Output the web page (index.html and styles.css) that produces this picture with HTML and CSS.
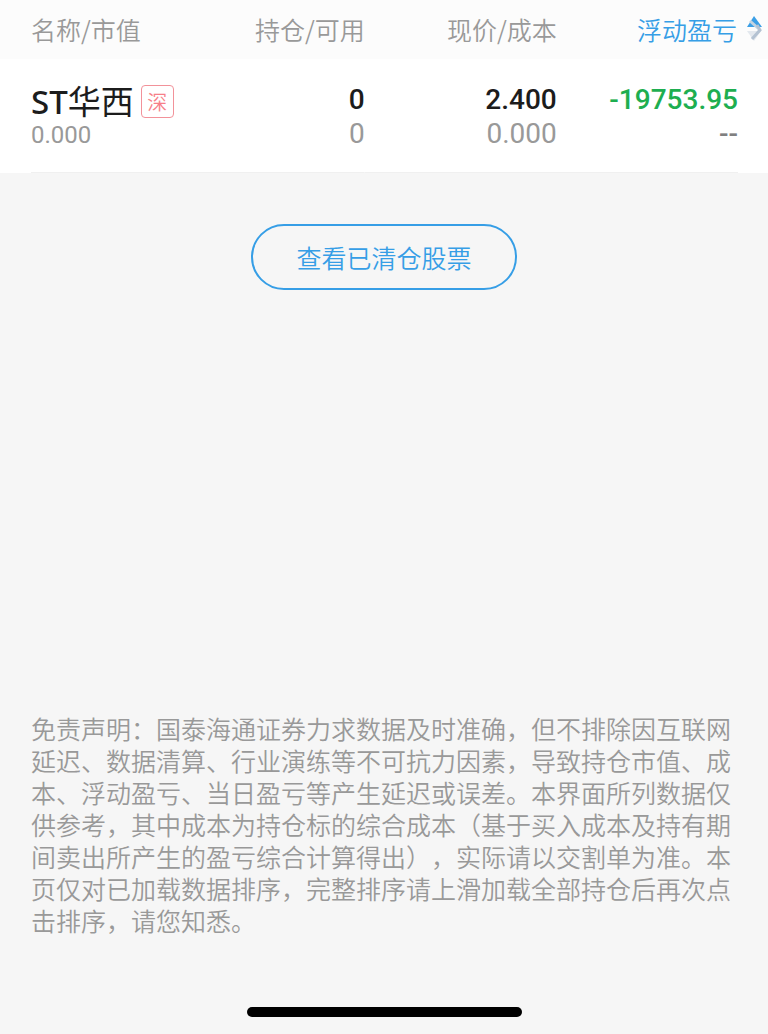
FILE: index.html
```
<!DOCTYPE html>
<html lang="zh-CN">
<head>
  <meta charset="UTF-8" />
  <meta name="viewport" content="width=device-width, initial-scale=1.0"/>
  <title>持仓</title>
  <link rel="stylesheet" href="styles.css">
</head>
<body>

  <main>
    <table class="positions">
      <thead>
        <tr>
          <th class="col-name" scope="col">名称/市值</th>
          <th class="col-hold" scope="col">持仓/可用</th>
          <th class="col-price" scope="col">现价/成本</th>
          <th class="col-profit" scope="col">
            <button class="sort" type="button">
              浮动盈亏
              <svg class="sort-icon" width="16" height="26" viewBox="0 0 16 26" aria-hidden="true">
                <path d="M7 0 15 11H0z" fill="#3b9fe6"/>
                <path d="M0 15h14L7 25z" fill="#e3e8ee"/>
                <path d="M3 5 12 13" fill="none" stroke="#c3d3e0" stroke-width="3"/>
                <path d="M10 9 13 14 5 23" fill="none" stroke="#b4c2d2" stroke-width="3"/>
              </svg>
            </button>
          </th>
        </tr>
      </thead>
      <tbody>
        <tr>
          <td class="col-name">
            <div class="stock"><span class="stock-name"><b>ST</b>华西</span><span class="market">深</span></div>
            <div class="value">0.000</div>
          </td>
          <td>
            <div class="num">0</div>
            <div class="num sub">0</div>
          </td>
          <td>
            <div class="num">2.400</div>
            <div class="num sub">0.000</div>
          </td>
          <td class="profit">
            <div class="num down">-19753.95</div>
            <div class="num none">--</div>
          </td>
        </tr>
      </tbody>
    </table>

    <button class="cleared" type="button">查看已清仓股票</button>
  </main>

  <footer>
    <p class="disclaimer">免责声明：国泰海通证券力求数据及时准确，但不排除因互联网延迟、数据清算、行业演练等不可抗力因素，导致持仓市值、成本、浮动盈亏、当日盈亏等产生延迟或误差。本界面所列数据仅供参考，其中成本为持仓标的综合成本（基于买入成本及持有期间卖出所产生的盈亏综合计算得出），实际请以交割单为准。本页仅对已加载数据排序，完整排序请上滑加载全部持仓后再次点击排序，请您知悉。</p>
    <div class="home-bar"></div>
  </footer>

</body>
</html>
```

FILE: styles.css
```
* {
  box-sizing: border-box;
  margin: 0;
  padding: 0;
}

body {
  display: flex;
  flex-direction: column;
  min-height: 100vh;
  font-family: 'Noto Sans CJK SC', sans-serif;
  font-size: 25px;
  font-weight: 350;
  line-height: 32px;
  color: #999;
  background-color: #f6f6f6;
}

button {
  font: inherit;
  color: #369ee6;
  background: none;
  border: none;
  cursor: pointer;
}

/* positions table */
.positions {
  width: 100%;
  table-layout: fixed;
  border-collapse: collapse;
  background-color: #fff;
  text-align: right;
  white-space: nowrap;
}

.positions th {
  height: 59px;
  padding-bottom: 2px;
  font-weight: 350;
  background-color: #fcfcfc;
}

.positions td {
  height: 114px;
  padding-top: 25px;
  vertical-align: top;
  background: linear-gradient(#f0f0f0, #f0f0f0) bottom / 100% 1px no-repeat;
}

.positions .col-name {
  width: 24%;
  padding-left: 31px;
  text-align: left;
  background-origin: content-box;
}

.col-hold {
  width: 23.5%;
}

.col-price {
  width: 25%;
}

.positions .col-profit {
  padding-right: 5px;
}

.positions .profit {
  padding-right: 30px;
  background-origin: content-box;
}

.sort {
  display: flex;
  justify-content: flex-end;
  align-items: center;
  gap: 10px;
  width: 100%;
}

.stock {
  display: flex;
  align-items: center;
  gap: 7px;
  height: 35px;
}

.stock-name {
  font-family: 'Noto Sans', 'Noto Sans CJK SC', sans-serif;
  font-size: 33px;
  font-weight: 400;
  color: #1c1c1c;
}

.stock-name b {
  font-weight: 500;
}

.market {
  width: 33px;
  height: 33px;
  border: 1px solid #f2929a;
  border-radius: 4px;
  font-size: 20px;
  text-align: center;
  color: #f77f89;
}

.value {
  font-family: Roboto, sans-serif;
  font-size: 24px;
  font-weight: 400;
}

.num {
  height: 34px;
  font-family: Roboto, sans-serif;
  font-size: 28px;
  font-weight: 500;
  color: #1c1c1c;
}

.sub {
  font-weight: 400;
  color: #999;
}

.down {
  color: #1eae50;
}

.none {
  color: #808080;
}

.cleared {
  display: block;
  height: 66px;
  margin: 51px auto;
  padding: 0 43px;
  border: 2px solid #369ee6;
  border-radius: 33px;
}

/* bottom of the page */
footer {
  margin-top: auto;
  padding: 0 31px 17px;
}

.disclaimer {
  margin-bottom: 71px;
  text-spacing-trim: space-all;
}

.home-bar {
  width: 275px;
  height: 10px;
  margin: 0 auto;
  border-radius: 5px;
  background-color: #000;
}
```
